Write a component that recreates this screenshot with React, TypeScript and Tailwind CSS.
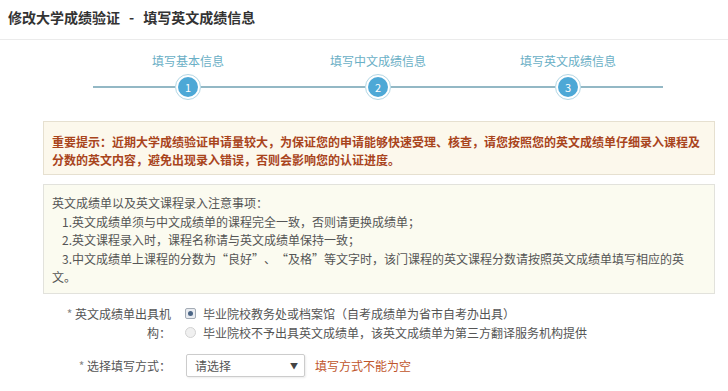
const steps = ["填写基本信息", "填写中文成绩信息", "填写英文成绩信息"];

const Step = ({ label, n }: { label: string; n: number }) => {
  return (
    <div className="w-[190px] flex flex-col items-center">
      <div className="h-[18px] leading-[18px] text-[12px] text-[#6aafc6]">{label}</div>
      <div className="mt-[4px] w-full flex items-center">
        <div className="flex-1 h-[2px] bg-[#93b8c5]" />
        <div className="w-[26px] h-[26px] rounded-full bg-white border border-[#b3d7e5] flex items-center justify-center">
          <div className="w-[20px] h-[20px] rounded-full bg-[#4da8d6] text-white text-[11px] leading-[20px] text-center">
            {n}
          </div>
        </div>
        <div className="flex-1 h-[2px] bg-[#93b8c5]" />
      </div>
    </div>
  );
};

// full-width looking quote marks, as in the original page
const Q = ({ open }: { open?: boolean }) => (
  <span className={open ? "inline-block w-[12px] indent-0 text-right" : "inline-block w-[12px] indent-0 text-left"}>
    {open ? "“" : "”"}
  </span>
);

const Radio = ({ checked }: { checked?: boolean }) =>
  checked ? (
    <span className="w-[11px] h-[11px] rounded-[2px] border border-[#a3abb5] bg-[#e9ecf1] flex items-center justify-center shrink-0">
      <span className="w-[5px] h-[5px] rounded-full bg-[#4b6585]" />
    </span>
  ) : (
    <span className="w-[11px] h-[11px] rounded-full border border-[#d2d2d2] bg-[#f0f0f0] shrink-0" />
  );

export default function App() {
  return (
    <div className="w-[728px] h-[391px] bg-white overflow-hidden font-['Noto_Sans_CJK_SC','Liberation_Sans',sans-serif]">
      <div className="h-[40px] border-b border-[#ebebeb] pl-2 pt-[8px]">
        <h1 className="text-[14px] leading-[18px] font-bold text-[#333]">
          修改大学成绩验证<span className="mx-[9px]">-</span>填写英文成绩信息
        </h1>
      </div>

      <div className="flex pl-[93px] pt-[12px]">
        {steps.map((s, i) => (
          <Step key={s} label={s} n={i + 1} />
        ))}
      </div>

      <div className="ml-[43px] w-[672px] mt-[21px] border border-[#e6e0d0] bg-[#fcf8ec] px-2 pt-[11px] pb-[5px] text-[12px] leading-[18px] font-bold text-[#a9441c] whitespace-nowrap">
        重要提示：近期大学成绩验证申请量较大，为保证您的申请能够快速受理、核查，请您按照您的英文成绩单仔细录入课程及
        <br />
        分数的英文内容，避免出现录入错误，否则会影响您的认证进度。
      </div>

      <div className="ml-[43px] w-[672px] mt-[9px] border border-[#e2e2dc] bg-[#fbfbf0] px-2 pt-[9px] pb-[6px] text-[12px] leading-[18.5px] text-[#555]">
        <p>英文成绩单以及英文课程录入注意事项：</p>
        <p className="indent-[10px]">1.英文成绩单须与中文成绩单的课程完全一致，否则请更换成绩单；</p>
        <p className="indent-[10px]">2.英文课程录入时，课程名称请与英文成绩单保持一致；</p>
        <p className="indent-[10px]">
          3.中文成绩单上课程的分数为<Q open />良好<Q />、<Q open />及格<Q />
          等文字时，该门课程的英文课程分数请按照英文成绩单填写相应的英
          <br />
          文。
        </p>
      </div>

      <div className="mt-[10px] text-[12px] leading-[19px] text-[#555]">
        <div className="flex">
          <div className="w-[110px] ml-[61px] text-right">
            <span className="text-[#888]">*</span> 英文成绩单出具机构：
          </div>
          <div className="ml-[14px] flex flex-col">
            <label className="flex items-center gap-[7px]">
              <Radio checked />
              <span>毕业院校教务处或档案馆（自考成绩单为省市自考办出具）</span>
            </label>
            <label className="flex items-center gap-[7px]">
              <Radio />
              <span>毕业院校不予出具英文成绩单，该英文成绩单为第三方翻译服务机构提供</span>
            </label>
          </div>
        </div>

        <div className="flex items-center mt-[12px]">
          <div className="w-[110px] ml-[61px] text-right">
            <span className="text-[#888]">*</span> 选择填写方式：
          </div>
          <div className="ml-[15px] w-[119px] h-[23px] border border-[#ccc] rounded-[2px] shadow-[1px_1px_2px_rgba(0,0,0,0.08)] flex items-center justify-between pl-[8px] pr-[6px] text-[#555]">
            <span>请选择</span>
            <span className="text-[8px] text-[#444]">▼</span>
          </div>
          <span className="ml-[10px] text-[#c0552b]">填写方式不能为空</span>
        </div>
      </div>
    </div>
  );
}
